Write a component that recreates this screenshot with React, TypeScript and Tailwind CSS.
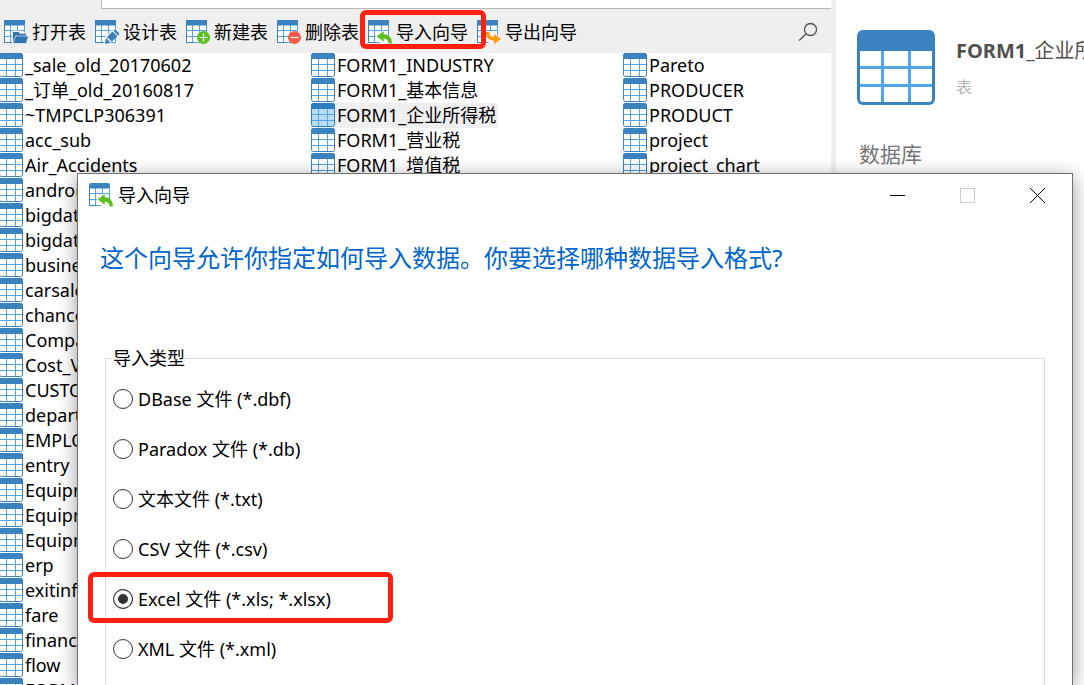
import { useState } from 'react'
import type { ReactNode } from 'react'

type Badge = 'open' | 'design' | 'add' | 'remove' | 'import' | 'export'

type Action = {
  label: string
  badge: Badge
  highlighted?: boolean
}

const actions: Action[] = [
  { label: '打开表', badge: 'open' },
  { label: '设计表', badge: 'design' },
  { label: '新建表', badge: 'add' },
  { label: '删除表', badge: 'remove' },
  { label: '导入向导', badge: 'import', highlighted: true },
  { label: '导出向导', badge: 'export' },
]

const columns = [
  [
    '_sale_old_20170602',
    '_订单_old_20160817',
    '~TMPCLP306391',
    'acc_sub',
    'Air_Accidents',
    'android',
    'bigdata',
    'bigdata',
    'business',
    'carsales',
    'chance',
    'Company',
    'Cost_V',
    'CUSTOMER',
    'department',
    'EMPLOYEE',
    'entry',
    'Equipment',
    'Equipment',
    'Equipment',
    'erp',
    'exitinfo',
    'fare',
    'finance',
    'flow',
    'FORM1',
  ],
  ['FORM1_INDUSTRY', 'FORM1_基本信息', 'FORM1_企业所得税', 'FORM1_营业税', 'FORM1_增值税'],
  ['Pareto', 'PRODUCER', 'PRODUCT', 'project', 'project_chart'],
]

const formats = [
  { id: 'dbf', label: 'DBase 文件 (*.dbf)' },
  { id: 'db', label: 'Paradox 文件 (*.db)' },
  { id: 'txt', label: '文本文件 (*.txt)' },
  { id: 'csv', label: 'CSV 文件 (*.csv)' },
  { id: 'xls', label: 'Excel 文件 (*.xls; *.xlsx)' },
  { id: 'xml', label: 'XML 文件 (*.xml)' },
]

const badges: Record<Badge, ReactNode> = {
  open: (
    <>
      <path d="M8 10.500h7.500l1.500 2h6.500v11.500H8z" fill="#efefef" />
      <path d="M9 23V12h5.500l1.300 1.700H22V17H12z" fill="#2f74ae" />
      <path d="M11.500 16h13l-2.300 7.500H9z" fill="#2f74ae" stroke="#efefef" strokeWidth=".7" />
    </>
  ),
  design: (
    <>
      <path d="M9 24v-6l9-9.500 6 5-9 10.500z" fill="#efefef" />
      <path d="m9.800 24 1.300-6 4.700 4.700zM12 17l5.500-5.500 4.800 4.800-5.500 5.500zM18.400 10.700l1.800-1.500 4.400 4.600-1.500 1.700z" fill="#3a83bf" />
    </>
  ),
  add: (
    <>
      <circle cx="17.500" cy="17.500" r="6.500" fill="#5bbf21" />
      <path d="M17.500 13.500v8M13.500 17.500h8" stroke="#fff" strokeWidth="1.2" />
    </>
  ),
  remove: (
    <>
      <circle cx="17.500" cy="17.500" r="6.500" fill="#ff5a48" />
      <path d="M13.500 17.500h8" stroke="#fff" strokeWidth="1.2" />
    </>
  ),
  import: (
    <>
      <path d="M7.500 16l8-6v4c5 0 8 3 8 10H13z" fill="#f7f7f7" />
      <path d="m8.700 16.300 7-5.100v3.100c5.300 0 8.200 3.300 8.200 9.200h-3.400c0-3-1.300-4.700-4.800-4.700v2.900z" fill="#5bbf21" />
    </>
  ),
  export: (
    <>
      <path d="M8 11h5l10 6-3 7H12z" fill="#f2f2f2" />
      <path d="M9 12h3.400c0 3.200 1.400 5 4.600 5v-3.100l7 5.100-7 5v-3.500c-5.300 0-8-3-8-8.500z" fill="#ff9b0b" />
    </>
  ),
}

function ActionIcon({ badge, rounded = false }: { badge: Badge; rounded?: boolean }) {
  return (
    <svg className="size-6 shrink-0" viewBox="0 0 24 24" aria-hidden="true">
      <path d="M.5 5h20v17H.5z" fill="#fff" />
      <path d="M.5 5v17.500H21M20.500 5v17M6.500 5v17M13.500 5v17M0 10.500h21M0 16.500h21" fill="none" stroke="#52a5e6" />
      <path d="M.5 4v18.500H8" fill="none" stroke="#3a83bf" />
      <rect width="21" height="5.500" rx={rounded ? 2 : 0} fill="#3a83bf" />
      {badges[badge]}
    </svg>
  )
}

function TableIcon({ selected = false }: { selected?: boolean }) {
  return (
    <svg className="size-6 shrink-0" viewBox="0 0 24 24" aria-hidden="true">
      <rect x=".5" y=".5" width="23" height="23" rx="2" fill={selected ? '#bcdcf5' : '#fff'} />
      <path d="M7.500 6v17M16.500 6v17M1 11.500h22M1 17.500h22" stroke="#52a5e6" />
      <rect x=".5" y=".5" width="23" height="23" rx="2" fill="none" stroke={selected ? '#2b7dc4' : '#3a83bf'} />
      <path d="M0 6V2.500a2.500 2.500 0 0 1 2.500-2.500h19a2.500 2.500 0 0 1 2.500 2.500V6z" fill={selected ? '#2b7dc4' : '#3a83bf'} />
    </svg>
  )
}

function LargeTableIcon() {
  return (
    <svg className="h-[75px] w-[78px] shrink-0" viewBox="0 0 78 75" aria-hidden="true">
      <rect width="78" height="75" rx="6" fill="#3a83bf" />
      <path d="M3 21h72v48a3 3 0 0 1-3 3H6a3 3 0 0 1-3-3z" fill="#fff" />
      <path d="M25.500 21v51M52.500 21v51M3 37.500h72M3 55.500h72" stroke="#52a5e6" strokeWidth="3" />
    </svg>
  )
}

function Toolbar() {
  return (
    <div className="flex h-11 items-center gap-[9px] bg-[#efefef] pt-0.5 pl-1">
      {actions.map(action => (
        <button
          key={action.label}
          className={`flex shrink-0 items-center gap-1 whitespace-nowrap ${action.highlighted ? 'relative z-10' : ''}`}
        >
          <ActionIcon badge={action.badge} />
          {action.label}
          {action.highlighted && (
            <span className="pointer-events-none absolute -top-[10px] -right-[18px] -bottom-[5px] -left-2 rounded-md border-[5px] border-[#ff2012]" />
          )}
        </button>
      ))}
      <button aria-label="搜索" className="mr-[13px] ml-auto">
        <svg className="size-5" viewBox="0 0 20 20" fill="none" stroke="#505050" strokeWidth="1.3">
          <circle cx="12.500" cy="7.500" r="6" />
          <path d="m8.200 11.800-7 6.700" />
        </svg>
      </button>
    </div>
  )
}

function TableList() {
  const [selected, setSelected] = useState('FORM1_企业所得税')

  return (
    <div className="-ml-px flex min-h-0 flex-1 overflow-hidden bg-white">
      {columns.map((names, i) => (
        <ul key={i} className="w-[312px] shrink-0">
          {names.map((name, j) => (
            <li key={j} className="flex h-[25px]">
              <button
                onClick={() => setSelected(name)}
                className={`flex items-start gap-0.5 whitespace-nowrap pr-0.5 ${selected === name ? 'bg-[#efefef]' : ''}`}
              >
                <TableIcon selected={selected === name} />
                {name}
              </button>
            </li>
          ))}
        </ul>
      ))}
    </div>
  )
}

function DetailsPanel() {
  return (
    <aside className="w-[253px] shrink-0 overflow-hidden border-l-[5px] border-[#f0f0f0] bg-white pt-[30px] pl-[21px]">
      <div className="flex gap-[21px] whitespace-nowrap">
        <LargeTableIcon />
        <div className="pt-[7px]">
          <h2 className="text-xl leading-7 font-bold text-[#505050]">
            FORM1_<span className="font-normal">企业所得税</span>
          </h2>
          <p className="pt-2 text-base leading-7 text-[#b4b4b4]">表</p>
        </div>
      </div>
      <h3 className="mt-[33px] ml-0.5 text-[21px] leading-8 text-[#777]">数据库</h3>
    </aside>
  )
}

function ImportWizard() {
  const [format, setFormat] = useState('xls')

  return (
    <div
      role="dialog"
      aria-labelledby="wizard-title"
      className="absolute top-[173px] right-[11px] bottom-0 left-[77px] z-20 overflow-hidden border border-b-0 border-[#707070] bg-white shadow-[0_4px_18px_rgba(0,0,0,0.4)]"
    >
      <div className="flex h-[42px] items-center pl-[11px]">
        <ActionIcon badge="import" rounded />
        <h1 id="wizard-title" className="ml-[5px]">导入向导</h1>
        <div className="ml-auto flex h-full">
          <button aria-label="最小化" className="flex w-[70px] items-center justify-center">
            <span className="h-px w-[15px] bg-black" />
          </button>
          <button aria-label="最大化" disabled className="flex w-[70px] items-center justify-center">
            <span className="size-[15px] border border-[#ccc]" />
          </button>
          <button aria-label="关闭" className="flex w-[70px] items-center justify-center">
            <svg className="size-[15px]" viewBox="0 0 15 15" stroke="#000">
              <path d="m0 0 15 15M15 0 0 15" />
            </svg>
          </button>
        </div>
      </div>

      <p className="mt-6 ml-[22px] text-2xl leading-9 text-[#0066cc]">
        这个向导允许你指定如何导入数据。你要选择哪种数据导入格式?
      </p>

      <fieldset className="mx-[27px] mt-[70px] h-[600px] border border-[#dcdcdc] pl-[7px]">
        <legend className="leading-6">导入类型</legend>
        <div className="flex flex-col items-start gap-[26px] pt-[17px]">
          {formats.map(item => (
            <label key={item.id} className="relative flex h-6 items-center gap-[5px] whitespace-nowrap">
              <input
                type="radio"
                name="format"
                value={item.id}
                checked={format === item.id}
                onChange={() => setFormat(item.id)}
                className="size-5 appearance-none rounded-full border border-[#333] bg-white checked:bg-[#333] checked:shadow-[inset_0_0_0_4px_#fff]"
              />
              {item.label}
              {item.id === 'xls' && (
                <span className="pointer-events-none absolute -top-[15px] -left-[25px] h-[51px] w-[305px] rounded-md border-[5px] border-[#ff2012]" />
              )}
            </label>
          ))}
        </div>
      </fieldset>
    </div>
  )
}

export default function App() {
  return (
    <div className="relative flex h-screen overflow-hidden bg-[#efefef] font-['Noto_Sans','Noto_Sans_CJK_SC',sans-serif] text-lg leading-6 text-black">
      <main className="flex min-w-0 flex-1 flex-col">
        <div className="ml-[101px] h-[9px] shrink-0 border-b border-l border-[#b8b8b8] bg-white" />
        <Toolbar />
        <TableList />
      </main>
      <DetailsPanel />
      <ImportWizard />
    </div>
  )
}
